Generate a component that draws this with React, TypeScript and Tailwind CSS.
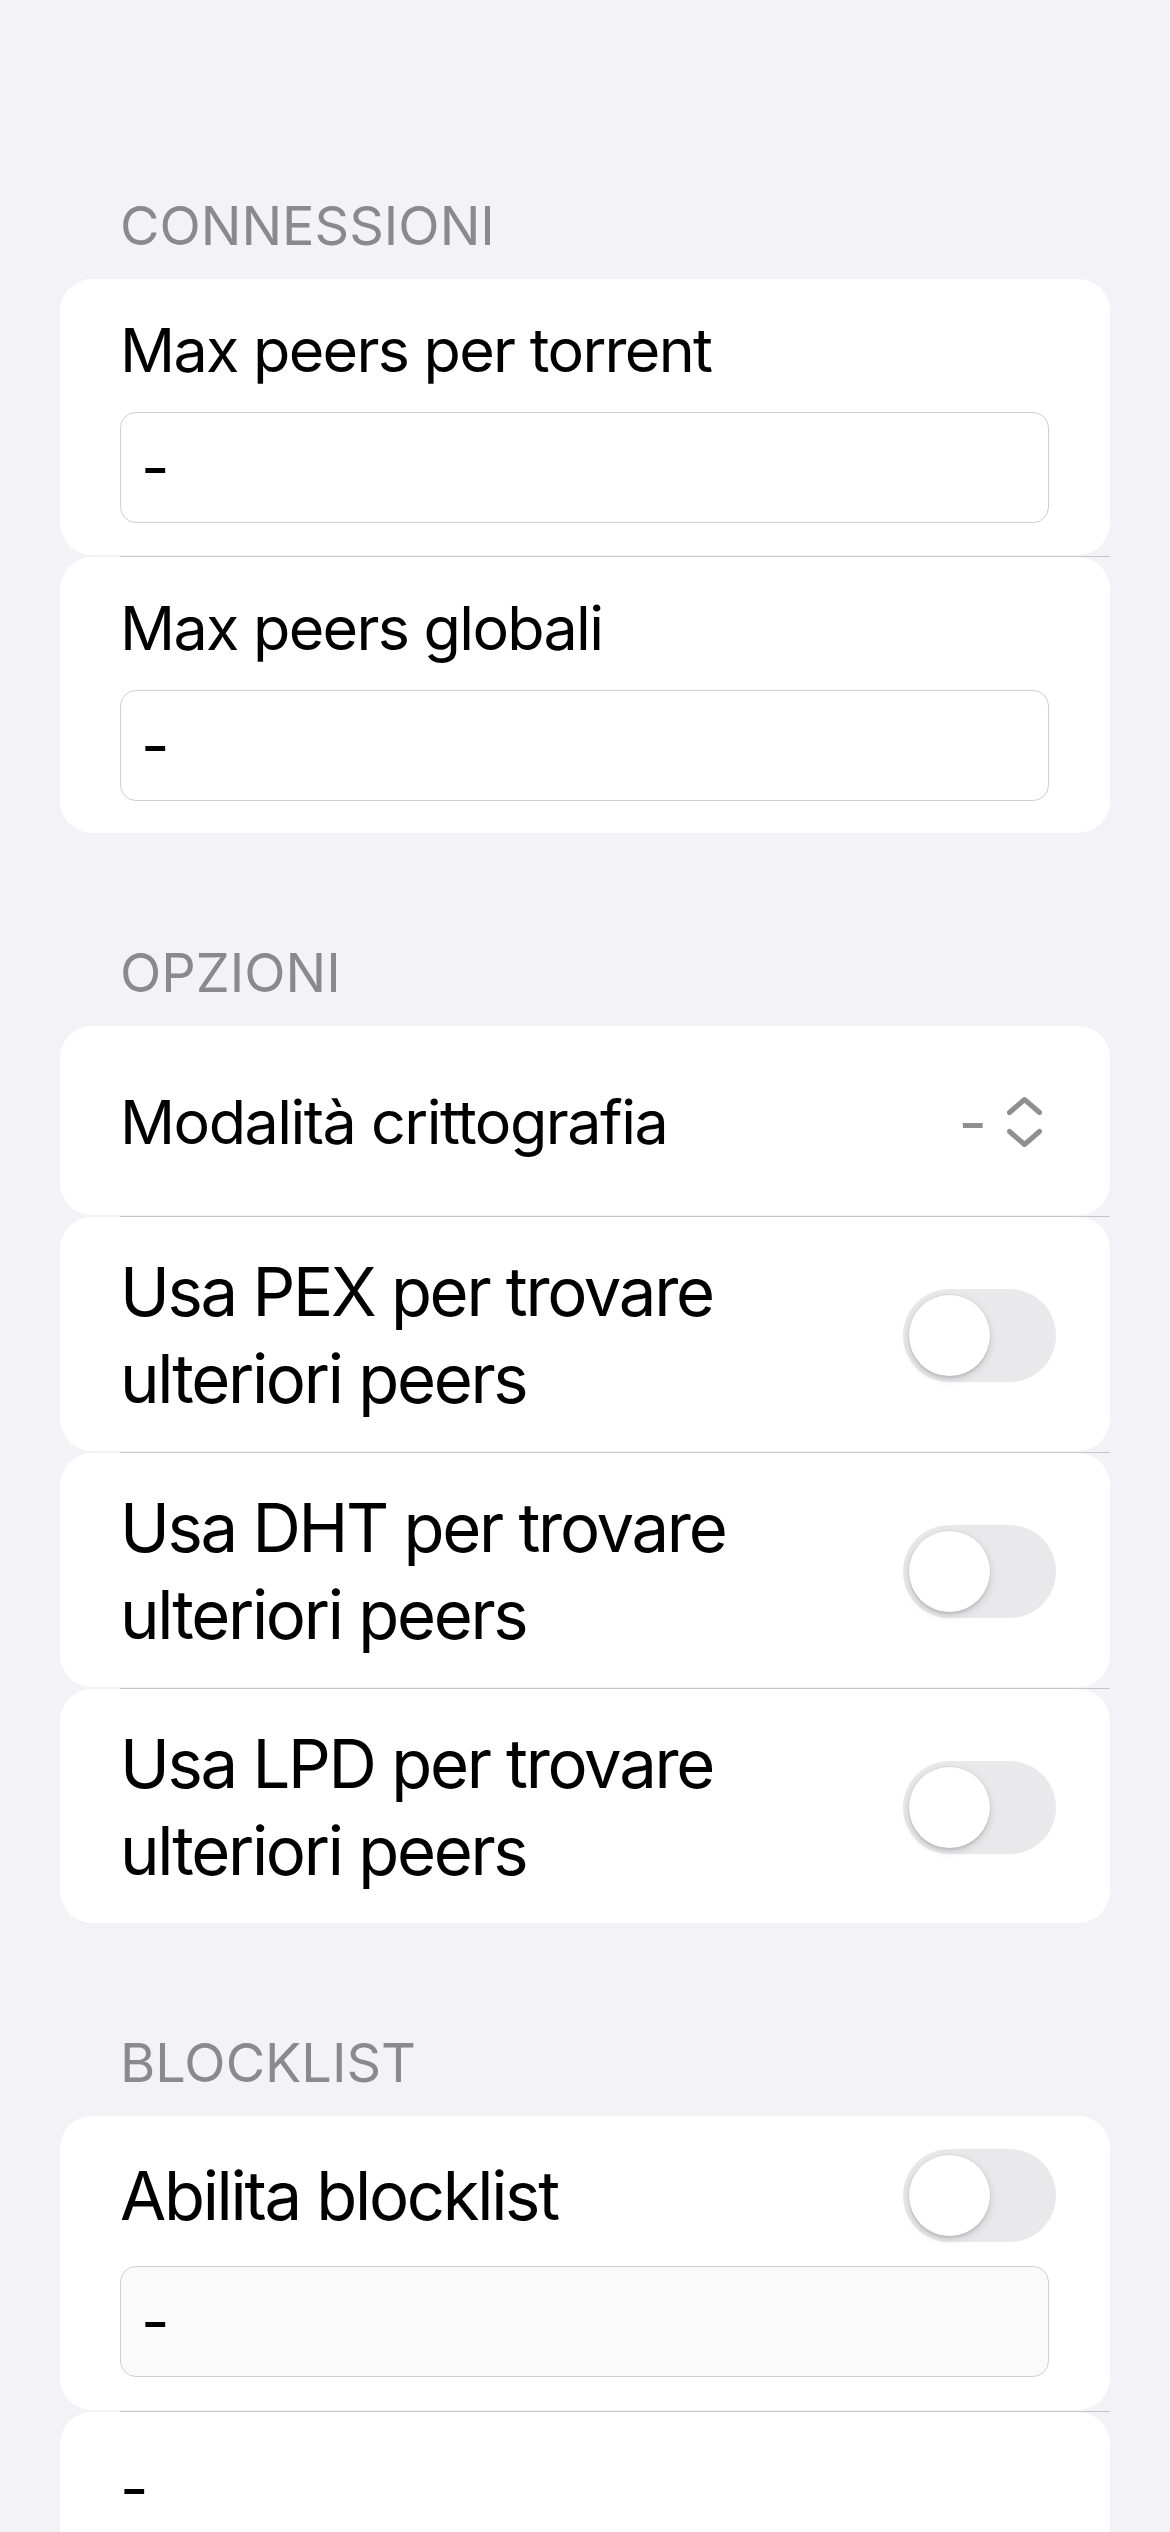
import React from "react";

const Toggle = () => (
  <div className="flex h-[93px] w-[153px] shrink-0 items-center rounded-full bg-[#e9e9eb] pl-[6px]">
    <div className="h-[81px] w-[81px] rounded-full bg-white shadow-[0_3px_8px_rgba(0,0,0,0.15),0_3px_1px_rgba(0,0,0,0.06),0_0_0_1px_rgba(0,0,0,0.04)]" />
  </div>
);

const Divider = () => <div className="ml-[60px] mt-px h-px bg-[#c6c6c8]" />;

const Header = ({ children, first }: { children: React.ReactNode; first?: boolean }) => (
  <div
    className={`${first ? "mt-[194px]" : "mt-[108px]"} mb-[21px] pl-[60px] text-[54px] leading-[64px] text-[#8a8a8e]`}
  >
    {children}
  </div>
);

const InputBox = ({ muted }: { muted?: boolean }) => (
  <div
    className={`flex h-[111px] items-center rounded-[16px] border-[1.5px] border-[#cfcfd1] pl-[20px] ${muted ? "bg-[#fafafa]" : "bg-white"}`}
  >
    <span className="text-[62px] leading-[87px] text-black">-</span>
  </div>
);

const FieldRow = ({ label }: { label: string }) => (
  <div className="rounded-[32px] bg-white pb-[32px] pl-[60px] pr-[61px] pt-[28px]">
    <div className="text-[61px] leading-[87px] tracking-[-1.7px] text-black">{label}</div>
    <div className="mt-[18px]">
      <InputBox />
    </div>
  </div>
);

const ToggleRow = ({ line1, line2 }: { line1: string; line2: string }) => (
  <div className="flex items-center rounded-[32px] bg-white pb-[29px] pl-[60px] pr-[54px] pt-[31px]">
    <div className="flex-1 text-[67px] leading-[87px] tracking-[-2.3px] text-black">
      {line1}
      <br />
      {line2}
    </div>
    <Toggle />
  </div>
);

export default function App() {
  return (
    <div
      className="min-h-[2532px] w-full overflow-hidden bg-[#f2f2f7]"
      style={{ fontFamily: "Inter, 'Noto Sans', sans-serif" }}
    >
      <div className="mx-[60px]">
        <Header first>CONNESSIONI</Header>
        <FieldRow label="Max peers per torrent" />
        <Divider />
        <FieldRow label="Max peers globali" />

        <Header>OPZIONI</Header>
        <div className="flex h-[189px] items-center rounded-[32px] bg-white pl-[60px] pr-[68px] pt-[3px]">
          <div className="flex-1 text-[61px] leading-[87px] tracking-[-1.5px] text-black">
            Modalità crittografia
          </div>
          <span className="mr-[20px] text-[62px] leading-[87px] text-[#8e8e93]">-</span>
          <svg width="35" height="52" viewBox="0 0 35 52" fill="none">
            <polyline
              points="2.5,16.5 17.5,3.5 32.5,16.5"
              stroke="#8e8e93"
              strokeWidth="5"
              strokeLinecap="round"
              strokeLinejoin="round"
            />
            <polyline
              points="2.5,35.5 17.5,48.5 32.5,35.5"
              stroke="#8e8e93"
              strokeWidth="5"
              strokeLinecap="round"
              strokeLinejoin="round"
            />
          </svg>
        </div>
        <Divider />
        <ToggleRow line1="Usa PEX per trovare" line2="ulteriori peers" />
        <Divider />
        <ToggleRow line1="Usa DHT per trovare" line2="ulteriori peers" />
        <Divider />
        <ToggleRow line1="Usa LPD per trovare" line2="ulteriori peers" />

        <Header>BLOCKLIST</Header>
        <div className="rounded-[32px] bg-white pb-[33px] pl-[60px] pr-[54px] pt-[33px]">
          <div className="flex items-center">
            <div className="flex-1 text-[67px] leading-[87px] tracking-[-2.3px] text-black">
              Abilita blocklist
            </div>
            <Toggle />
          </div>
          <div className="mr-[7px] mt-[24px]">
            <InputBox muted />
          </div>
        </div>
        <Divider />
        <div className="rounded-[32px] bg-white pb-[40px] pl-[60px] pt-[33px]">
          <div className="text-[62px] leading-[87px] text-black">-</div>
        </div>
      </div>
    </div>
  );
}
